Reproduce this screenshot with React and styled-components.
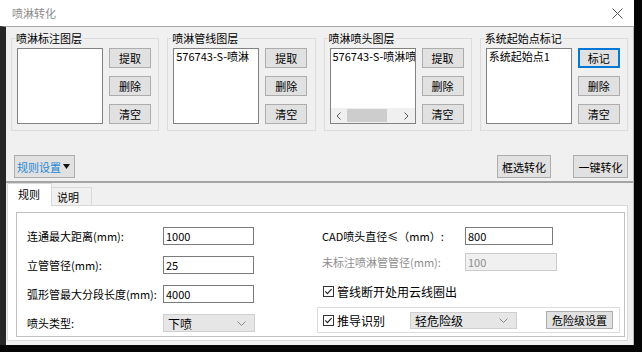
import React from 'react';
import styled, { createGlobalStyle } from 'styled-components';

const GlobalStyle = createGlobalStyle`
  html, body {
    margin: 0;
    padding: 0;
    background: #050505;
  }
  body {
    font-family: "Noto Sans CJK SC", "Noto Sans", sans-serif;
    font-size: 11px;
    color: #000;
  }
  * { box-sizing: border-box; }
`;

const Close = () => (
  <svg width="11" height="11" viewBox="0 0 11 11">
    <path d="M0.5 0.5 L10.5 10.5 M10.5 0.5 L0.5 10.5" stroke="#555" strokeWidth="1" />
  </svg>
);

const Chevron = () => (
  <svg width="9" height="5" viewBox="0 0 9 5">
    <path d="M0.5 0.5 L4.5 4.5 L8.5 0.5" fill="none" stroke="#8a8a8a" strokeWidth="1" />
  </svg>
);

const CheckIcon = () => (
  <svg width="11" height="11" viewBox="0 0 11 11">
    <rect x="0.5" y="0.5" width="10" height="10" fill="#fff" stroke="#333" />
    <path d="M2.3 5.4 L4.4 7.6 L8.6 3.2" fill="none" stroke="#222" strokeWidth="1.2" />
  </svg>
);

const DropArrow = () => (
  <svg width="7" height="5" viewBox="0 0 7 5">
    <path d="M0 0 L7 0 L3.5 5 Z" fill="#111" />
  </svg>
);

const groups = [
  { title: '喷淋标注图层', items: [], first: '提取' },
  { title: '喷淋管线图层', items: ['576743-S-喷淋'], first: '提取' },
  { title: '喷淋喷头图层', items: ['576743-S-喷淋喷头'], first: '提取', scroll: true },
  { title: '系统起始点标记', items: ['系统起始点1'], first: '标记', focus: true },
];

export default function App() {
  return (
    <>
      <GlobalStyle />
      <Window>
        <TitleBar>
          <span>喷淋转化</span>
          <Close />
        </TitleBar>
        <Body>
          <TopPanel>
            <GroupRow>
              {groups.map((g) => (
                <Group key={g.title}>
                  <Legend>{g.title}</Legend>
                  <ListBox>
                    {g.items.map((it) => (
                      <ListItem key={it}>{it}</ListItem>
                    ))}
                    {g.scroll && (
                      <HScroll>
                        <ScrollArrow>
                          <svg width="5" height="8" viewBox="0 0 5 8">
                            <path d="M4.5 0.5 L1 4 L4.5 7.5" fill="none" stroke="#555" />
                          </svg>
                        </ScrollArrow>
                        <Thumb />
                        <ScrollArrow>
                          <svg width="5" height="8" viewBox="0 0 5 8">
                            <path d="M0.5 0.5 L4 4 L0.5 7.5" fill="none" stroke="#555" />
                          </svg>
                        </ScrollArrow>
                      </HScroll>
                    )}
                  </ListBox>
                  <ButtonCol>
                    <Btn $w={42} $focus={g.focus}>{g.first}</Btn>
                    <Btn $w={42}>删除</Btn>
                    <Btn $w={42}>清空</Btn>
                  </ButtonCol>
                </Group>
              ))}
            </GroupRow>
            <ActionRow>
              <MenuBtn>
                <BlueText>规则设置</BlueText>
                <DropArrow />
              </MenuBtn>
              <Spacer />
              <Btn $w={54} $h={23}>框选转化</Btn>
              <Btn $w={55} $h={23}>一键转化</Btn>
            </ActionRow>
          </TopPanel>

          <BottomPanel>
            <TabBar>
              <Tab $active>规则</Tab>
              <Tab>说明</Tab>
            </TabBar>
            <TabPage>
              <RuleBox>
                <LeftCol>
                  <FieldRow>
                    <Label $w={136}>连通最大距离(mm):</Label>
                    <TextBox defaultValue="1000" $w={91} />
                  </FieldRow>
                  <FieldRow>
                    <Label $w={136}>立管管径(mm):</Label>
                    <TextBox defaultValue="25" $w={91} />
                  </FieldRow>
                  <FieldRow>
                    <Label $w={136}>弧形管最大分段长度(mm):</Label>
                    <TextBox defaultValue="4000" $w={91} />
                  </FieldRow>
                  <FieldRow>
                    <Label $w={136}>喷头类型:</Label>
                    <Select $w={92}>
                      <span>下喷</span>
                      <Chevron />
                    </Select>
                  </FieldRow>
                </LeftCol>
                <RightCol>
                  <FieldRow $indent>
                    <Label $w={143}>CAD喷头直径≤（mm）:</Label>
                    <TextBox defaultValue="800" $w={88} />
                  </FieldRow>
                  <FieldRow $indent $top={8}>
                    <Label $w={143} $muted>未标注喷淋管管径(mm):</Label>
                    <TextBox defaultValue="100" $w={92} disabled />
                  </FieldRow>
                  <CheckRow $indent $top={13}>
                    <CheckIcon />
                    <span>管线断开处用云线圈出</span>
                  </CheckRow>
                  <SubGroup>
                    <CheckRow $w={87}>
                      <CheckIcon />
                      <span>推导识别</span>
                    </CheckRow>
                    <Select $w={107} $h={17}>
                      <span>轻危险级</span>
                      <Chevron />
                    </Select>
                    <Btn $w={67} $h={18} $ml={29}>危险级设置</Btn>
                  </SubGroup>
                </RightCol>
              </RuleBox>
            </TabPage>
          </BottomPanel>
        </Body>
      </Window>
    </>
  );
}

const Window = styled.div`
  width: 634px;
  height: 345px;
  display: flex;
  flex-direction: column;
  background: #f0f0f0;
`;

const TitleBar = styled.div`
  height: 26px;
  flex-shrink: 0;
  background: #fff;
  display: flex;
  align-items: center;
  justify-content: space-between;
  padding: 0 11px 0 12px;
  color: #8a8a8a;
  font-size: 11px;
`;

const Body = styled.div`
  flex: 1;
  display: flex;
  flex-direction: column;
  border-top: 1px solid #a8a8a8;
  border-left: 6px solid #262626;
  border-right: 1px solid #b8b8b8;
  background: #f0f0f0;
`;

const TopPanel = styled.div`
  padding: 4px 5px 3px 5px;
`;

const GroupRow = styled.div`
  display: flex;
  gap: 8px;
`;

const Group = styled.fieldset`
  flex: 1;
  min-width: 0;
  margin: 0;
  border: 1px solid #dcdcdc;
  padding: 3px 5px 6px 5px;
  display: flex;
  gap: 6px;
`;

const Legend = styled.legend`
  padding: 0 1px;
  margin-left: -2px;
  font-size: 11px;
  line-height: 14px;
`;

const ListBox = styled.div`
  width: 86px;
  height: 76px;
  flex-shrink: 0;
  background: #fff;
  border: 1px solid #828282;
  display: flex;
  flex-direction: column;
  overflow: hidden;
`;

const ListItem = styled.div`
  padding: 1px 0 0 2px;
  line-height: 13px;
  white-space: nowrap;
  overflow: hidden;
`;

const HScroll = styled.div`
  margin-top: auto;
  height: 15px;
  display: flex;
  align-items: center;
  background: #f0f0f0;
`;

const ScrollArrow = styled.div`
  width: 16px;
  height: 15px;
  display: flex;
  align-items: center;
  justify-content: center;
`;

const Thumb = styled.div`
  flex: 1;
  height: 13px;
  margin-right: 12px;
  background: #cdcdcd;
`;

const ButtonCol = styled.div`
  display: flex;
  flex-direction: column;
  gap: 8px;
`;

const Btn = styled.button`
  width: ${(p) => p.$w}px;
  height: ${(p) => p.$h || 20}px;
  margin-left: ${(p) => p.$ml || 0}px;
  flex-shrink: 0;
  padding: 0;
  background: #e1e1e1;
  border: ${(p) => (p.$focus ? '2px solid #0078d7' : '1px solid #adadad')};
  font-family: inherit;
  font-size: 11px;
  color: #000;
`;

const ActionRow = styled.div`
  display: flex;
  align-items: center;
  gap: 22px;
  margin-top: 24px;
  height: 23px;
  padding-left: 3px;
`;

const Spacer = styled.div`
  flex: 1;
`;

const MenuBtn = styled.button`
  width: 61px;
  height: 23px;
  padding: 0 0 0 2px;
  display: flex;
  align-items: center;
  gap: 2px;
  background: #e1e1e1;
  border: 1px solid #adadad;
  font-family: inherit;
  font-size: 11px;
`;

const BlueText = styled.span`
  color: #1f87d6;
`;

const BottomPanel = styled.div`
  flex: 1;
  display: flex;
  flex-direction: column;
  border-top: 2px solid #a5a5a5;
  padding: 1px 5px 4px 1px;
`;

const TabBar = styled.div`
  display: flex;
  align-items: flex-end;
  height: 22px;
  margin-bottom: -1px;
`;

const Tab = styled.div`
  position: relative;
  z-index: 1;
  height: ${(p) => (p.$active ? 23 : 19)}px;
  width: ${(p) => (p.$active ? 45 : 40)}px;
  padding: ${(p) => (p.$active ? '3px 0 0 10px' : '2px 0 0 5px')};
  background: ${(p) => (p.$active ? '#fff' : '#f0f0f0')};
  border: 1px solid #d9d9d9;
  border-bottom: ${(p) => (p.$active ? 'none' : '1px solid #d9d9d9')};
  border-left: ${(p) => (p.$active ? '1px solid #d9d9d9' : 'none')};
  font-size: 11px;
  line-height: 14px;
`;

const TabPage = styled.div`
  flex: 1;
  display: flex;
  background: #fff;
  border: 1px solid #d9d9d9;
  padding: 6px 2px 3px 8px;
`;

const RuleBox = styled.div`
  flex: 1;
  display: grid;
  grid-template-columns: 290px 1fr;
  border: 1px solid #c2c2c2;
  padding: 14px 4px 0 10px;
`;

const LeftCol = styled.div`
  display: flex;
  flex-direction: column;
  gap: 11px;
`;

const RightCol = styled.div`
  display: flex;
  flex-direction: column;
`;

const FieldRow = styled.div`
  display: flex;
  align-items: center;
  height: 18px;
  margin-left: ${(p) => (p.$indent ? 5 : 0)}px;
  margin-top: ${(p) => p.$top || 0}px;
`;

const Label = styled.span`
  width: ${(p) => p.$w}px;
  flex-shrink: 0;
  white-space: nowrap;
  color: ${(p) => (p.$muted ? '#8d8d8d' : '#000')};
`;

const TextBox = styled.input`
  width: ${(p) => p.$w}px;
  height: 18px;
  padding: 0 2px;
  border: 1px solid ${(p) => (p.disabled ? '#cccccc' : '#7a7a7a')};
  background: ${(p) => (p.disabled ? '#f0f0f0' : '#fff')};
  color: ${(p) => (p.disabled ? '#8d8d8d' : '#000')};
  font-family: inherit;
  font-size: 11px;
  outline: none;
`;

const Select = styled.div`
  width: ${(p) => p.$w}px;
  height: ${(p) => p.$h || 18}px;
  flex-shrink: 0;
  display: flex;
  align-items: center;
  justify-content: space-between;
  padding: 0 8px 0 4px;
  background: #e6e6e6;
  border: 1px solid #cfcfcf;
  font-size: 12px;
`;

const CheckRow = styled.div`
  display: flex;
  align-items: center;
  gap: 3px;
  height: 14px;
  width: ${(p) => (p.$w ? `${p.$w}px` : 'auto')};
  flex-shrink: 0;
  margin-left: ${(p) => (p.$indent ? 6 : 0)}px;
  margin-top: ${(p) => p.$top || 0}px;
  font-size: 12px;
`;

const SubGroup = styled.div`
  display: flex;
  align-items: center;
  width: 303px;
  height: 26px;
  margin-top: 9px;
  padding-left: 5px;
  border: 1px solid #dcdcdc;
`;
